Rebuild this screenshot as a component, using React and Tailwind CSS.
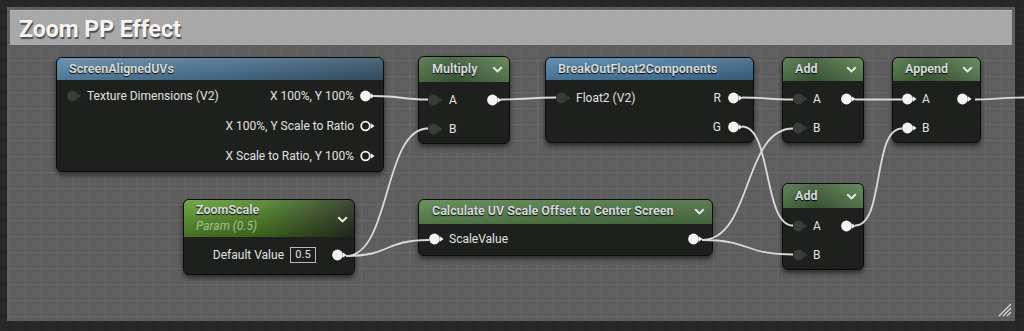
import React from 'react'

// ── graph canvas grid ──
const outerGrid =
  'bg-[#282828] bg-[linear-gradient(to_right,#202020_1px,transparent_1px),linear-gradient(to_bottom,#202020_1px,transparent_1px)] bg-[size:16px_16px] bg-[position:9px_12px]'
const commentGrid =
  'bg-[#5e5e5e] bg-[linear-gradient(to_right,#686868_1px,transparent_1px),linear-gradient(to_bottom,#686868_1px,transparent_1px)] bg-[size:16px_16px] bg-[position:2px_5px]'

const blueHeader =
  'bg-[linear-gradient(to_bottom,rgba(255,255,255,0.12),rgba(0,0,0,0.12)),linear-gradient(to_right,#5a86a4,#4b7391_45%,#365369)]'
const blueHeaderBright =
  'bg-[linear-gradient(to_bottom,rgba(255,255,255,0.12),rgba(0,0,0,0.12)),linear-gradient(to_right,#4f80a6,#4a7aa0_50%,#3c6585)]'
const opHeader =
  'bg-[linear-gradient(to_bottom,rgba(255,255,255,0.1),rgba(0,0,0,0.1)),linear-gradient(to_right,#4f7447,#3d5937_40%,#587e4f)]'
const paramHeader =
  'bg-[linear-gradient(to_bottom,rgba(255,255,255,0.1),rgba(0,0,0,0.3)),linear-gradient(to_right,#63a031,#528629_45%,#2a3423)]'
const funcHeader =
  'bg-[linear-gradient(to_bottom,rgba(255,255,255,0.1),rgba(0,0,0,0.1)),linear-gradient(to_right,#5a834d,#4d7443_60%,#4a6e41)]'

function Pin({ kind = 'empty' }) {
  const white = '#f2f2f2'
  const dark = '#3a3c3a'
  return (
    <svg width="15" height="12" viewBox="0 0 15 12" className="shrink-0">
      {kind === 'ring' ? (
        <circle cx="5.5" cy="6" r="4.3" fill="none" stroke={white} strokeWidth="1.8" />
      ) : (
        <circle cx="5.5" cy="6" r="5.4" fill={kind === 'filled' ? white : dark} />
      )}
      <path d="M10.8 3.2 L14.6 6 L10.8 8.8 Z" fill={kind === 'empty' ? dark : white} />
    </svg>
  )
}

function Chevron() {
  return (
    <svg width="11" height="7" viewBox="0 0 11 7" className="shrink-0">
      <path d="M1.2 1.2 L5.5 5.4 L9.8 1.2" fill="none" stroke="#e8e8e8" strokeWidth="2" />
    </svg>
  )
}

function Node({ className, children }) {
  return (
    <div
      className={`absolute flex flex-col overflow-hidden rounded-[6px] border border-[#0c0c0c] bg-[#1e201d] shadow-[0_3px_5px_rgba(0,0,0,0.55)] ${className}`}
    >
      {children}
    </div>
  )
}

function Title({ children }) {
  return (
    <span className="text-[12.5px] font-bold text-[#d4d9da] [text-shadow:0_1px_1px_#000]">
      {children}
    </span>
  )
}

function Label({ children }) {
  return <span className="text-[12px] text-[#e2e2e2]">{children}</span>
}

// bezier between an output tip and an input pin
function wire(x1, y1, x2, y2) {
  const d = Math.max(Math.abs(x2 - x1) * 0.55, 30)
  return `M${x1} ${y1} C${x1 + d} ${y1} ${x2 - d} ${y2} ${x2} ${y2}`
}

const wires = [
  [374, 96, 428, 99.5],
  [346, 256, 428, 128.5],
  [346, 256, 429, 240],
  [501, 99.5, 556, 97.5],
  [742, 97.5, 793, 99.5],
  [742, 126.5, 793, 225.5],
  [702, 240, 793, 128.5],
  [702, 240, 793, 254.5],
  [855, 99.5, 902, 99.5],
  [855, 225.5, 902, 128.5],
]

export default function App() {
  return (
    <div className={`relative h-[331px] w-[1024px] overflow-hidden [font-family:Roboto,'Liberation_Sans',sans-serif] ${outerGrid}`}>
      {/* Comment box */}
      <div className={`ml-[7px] mt-[7px] flex h-[314px] w-[1008px] flex-col p-[3px] ${commentGrid}`}>
        <div className="flex h-[35px] items-center border-t border-[#b8b8b8] bg-[#a8a8a8] pl-[9px] pt-[3px]">
          <span className="text-[23px] font-bold leading-none text-[#f4f4f4] [text-shadow:1px_2px_1px_rgba(0,0,0,0.55)]">
            Zoom PP Effect
          </span>
        </div>
        <div className="flex flex-1 items-end justify-end pb-[1px]">
          <svg width="14" height="14" viewBox="0 0 14 14">
            <path d="M13 1 L1 13 M13 5 L5 13 M13 9 L9 13" stroke="#dcdcdc" strokeWidth="1.2" />
          </svg>
        </div>
      </div>

      {/* ScreenAlignedUVs */}
      <Node className="left-[56px] top-[57px] h-[115px] w-[328px]">
        <div className={`flex h-[22px] items-center pl-[12px] ${blueHeader}`}>
          <Title>ScreenAlignedUVs</Title>
        </div>
        <div className="flex flex-col pt-px">
          <div className="flex h-[30px] items-center justify-between pl-[10px] pr-[8px]">
            <div className="flex items-center gap-[5px]">
              <Pin />
              <Label>Texture Dimensions (V2)</Label>
            </div>
            <div className="flex items-center gap-[6px]">
              <Label>X 100%, Y 100%</Label>
              <Pin kind="filled" />
            </div>
          </div>
          <div className="flex h-[30px] items-center justify-end gap-[6px] pr-[8px]">
            <Label>X 100%, Y Scale to Ratio</Label>
            <Pin kind="ring" />
          </div>
          <div className="flex h-[30px] items-center justify-end gap-[6px] pr-[8px]">
            <Label>X Scale to Ratio, Y 100%</Label>
            <Pin kind="ring" />
          </div>
        </div>
      </Node>

      {/* Multiply */}
      <Node className="left-[418px] top-[56px] h-[88px] w-[92px]">
        <div className={`flex h-[25px] items-center justify-between pl-[13px] pr-[6px] ${opHeader}`}>
          <Title>Multiply</Title>
          <Chevron />
        </div>
        <div className="flex flex-col pt-[3px]">
          <div className="flex h-[29px] items-center justify-between pl-[9px] pr-[7px]">
            <div className="flex items-center gap-[6px]">
              <Pin />
              <Label>A</Label>
            </div>
            <Pin kind="filled" />
          </div>
          <div className="flex h-[29px] items-center gap-[6px] pl-[9px]">
            <Pin />
            <Label>B</Label>
          </div>
        </div>
      </Node>

      {/* BreakOutFloat2Components */}
      <Node className="left-[545px] top-[57px] h-[86px] w-[209px]">
        <div className={`flex h-[22px] items-center pl-[12px] ${blueHeaderBright}`}>
          <Title>BreakOutFloat2Components</Title>
        </div>
        <div className="flex justify-between pl-[10px] pr-[10px] pt-[3px]">
          <div className="flex h-[29px] items-center gap-[5px]">
            <Pin />
            <Label>Float2 (V2)</Label>
          </div>
          <div className="flex flex-col items-end">
            <div className="flex h-[29px] items-center gap-[7px]">
              <Label>R</Label>
              <Pin kind="filled" />
            </div>
            <div className="flex h-[29px] items-center gap-[7px]">
              <Label>G</Label>
              <Pin kind="filled" />
            </div>
          </div>
        </div>
      </Node>

      {/* Add (top) */}
      <Node className="left-[782px] top-[57px] h-[86px] w-[82px]">
        <div className={`flex h-[24px] items-center justify-between pl-[12px] pr-[6px] ${opHeader}`}>
          <Title>Add</Title>
          <Chevron />
        </div>
        <div className="flex flex-col pt-[3px]">
          <div className="flex h-[29px] items-center justify-between pl-[10px] pr-[7px]">
            <div className="flex items-center gap-[5px]">
              <Pin />
              <Label>A</Label>
            </div>
            <Pin kind="filled" />
          </div>
          <div className="flex h-[29px] items-center gap-[5px] pl-[10px]">
            <Pin />
            <Label>B</Label>
          </div>
        </div>
      </Node>

      {/* Append */}
      <Node className="left-[892px] top-[57px] h-[86px] w-[89px]">
        <div className={`flex h-[24px] items-center justify-between pl-[12px] pr-[7px] ${opHeader}`}>
          <Title>Append</Title>
          <Chevron />
        </div>
        <div className="flex flex-col pt-[3px]">
          <div className="flex h-[29px] items-center justify-between pl-[9px] pr-[8px]">
            <div className="flex items-center gap-[5px]">
              <Pin kind="filled" />
              <Label>A</Label>
            </div>
            <Pin kind="filled" />
          </div>
          <div className="flex h-[29px] items-center gap-[5px] pl-[9px]">
            <Pin kind="filled" />
            <Label>B</Label>
          </div>
        </div>
      </Node>

      {/* ZoomScale */}
      <Node className="left-[183px] top-[199px] h-[76px] w-[172px]">
        <div className={`flex h-[37px] items-center justify-between pl-[12px] pr-[6px] ${paramHeader}`}>
          <div className="flex flex-col leading-[16px]">
            <Title>ZoomScale</Title>
            <span className="text-[12px] italic text-[#a3bf8c]">Param (0.5)</span>
          </div>
          <div className="pt-[2px]">
            <Chevron />
          </div>
        </div>
        <div className="flex h-[38px] items-center justify-end pr-[7px]">
          <Label>Default Value</Label>
          <span className="ml-[6px] flex h-[16px] w-[26px] items-center justify-center border border-[#b9b9b9] text-[11px] text-[#e2e2e2]">
            0.5
          </span>
          <span className="ml-[16px] flex">
            <Pin kind="filled" />
          </span>
        </div>
      </Node>

      {/* Calculate UV Scale Offset to Center Screen */}
      <Node className="left-[418px] top-[199px] h-[57px] w-[295px]">
        <div className={`flex h-[24px] items-center justify-between pl-[13px] pr-[7px] ${funcHeader}`}>
          <Title>Calculate UV Scale Offset to Center Screen</Title>
          <Chevron />
        </div>
        <div className="flex h-[32px] items-center justify-between pl-[10px] pr-[9px]">
          <div className="flex items-center gap-[5px]">
            <Pin kind="filled" />
            <Label>ScaleValue</Label>
          </div>
          <Pin kind="filled" />
        </div>
      </Node>

      {/* Add (bottom) */}
      <Node className="left-[782px] top-[183px] h-[87px] w-[82px]">
        <div className={`flex h-[24px] items-center justify-between pl-[12px] pr-[6px] ${opHeader}`}>
          <Title>Add</Title>
          <Chevron />
        </div>
        <div className="flex flex-col pt-[3px]">
          <div className="flex h-[29px] items-center justify-between pl-[10px] pr-[7px]">
            <div className="flex items-center gap-[5px]">
              <Pin />
              <Label>A</Label>
            </div>
            <Pin kind="filled" />
          </div>
          <div className="flex h-[29px] items-center gap-[5px] pl-[10px]">
            <Pin />
            <Label>B</Label>
          </div>
        </div>
      </Node>

      {/* Wires */}
      <svg className="pointer-events-none absolute inset-0" width="1024" height="331">
        {wires.map(([x1, y1, x2, y2], i) => (
          <path key={i} d={wire(x1, y1, x2, y2)} fill="none" stroke="#d9d9d9" strokeWidth="1.8" />
        ))}
        <path d="M975 99.5 C992 99.5 1002 97.5 1024 97.5" fill="none" stroke="#d9d9d9" strokeWidth="1.8" />
      </svg>
    </div>
  )
}
